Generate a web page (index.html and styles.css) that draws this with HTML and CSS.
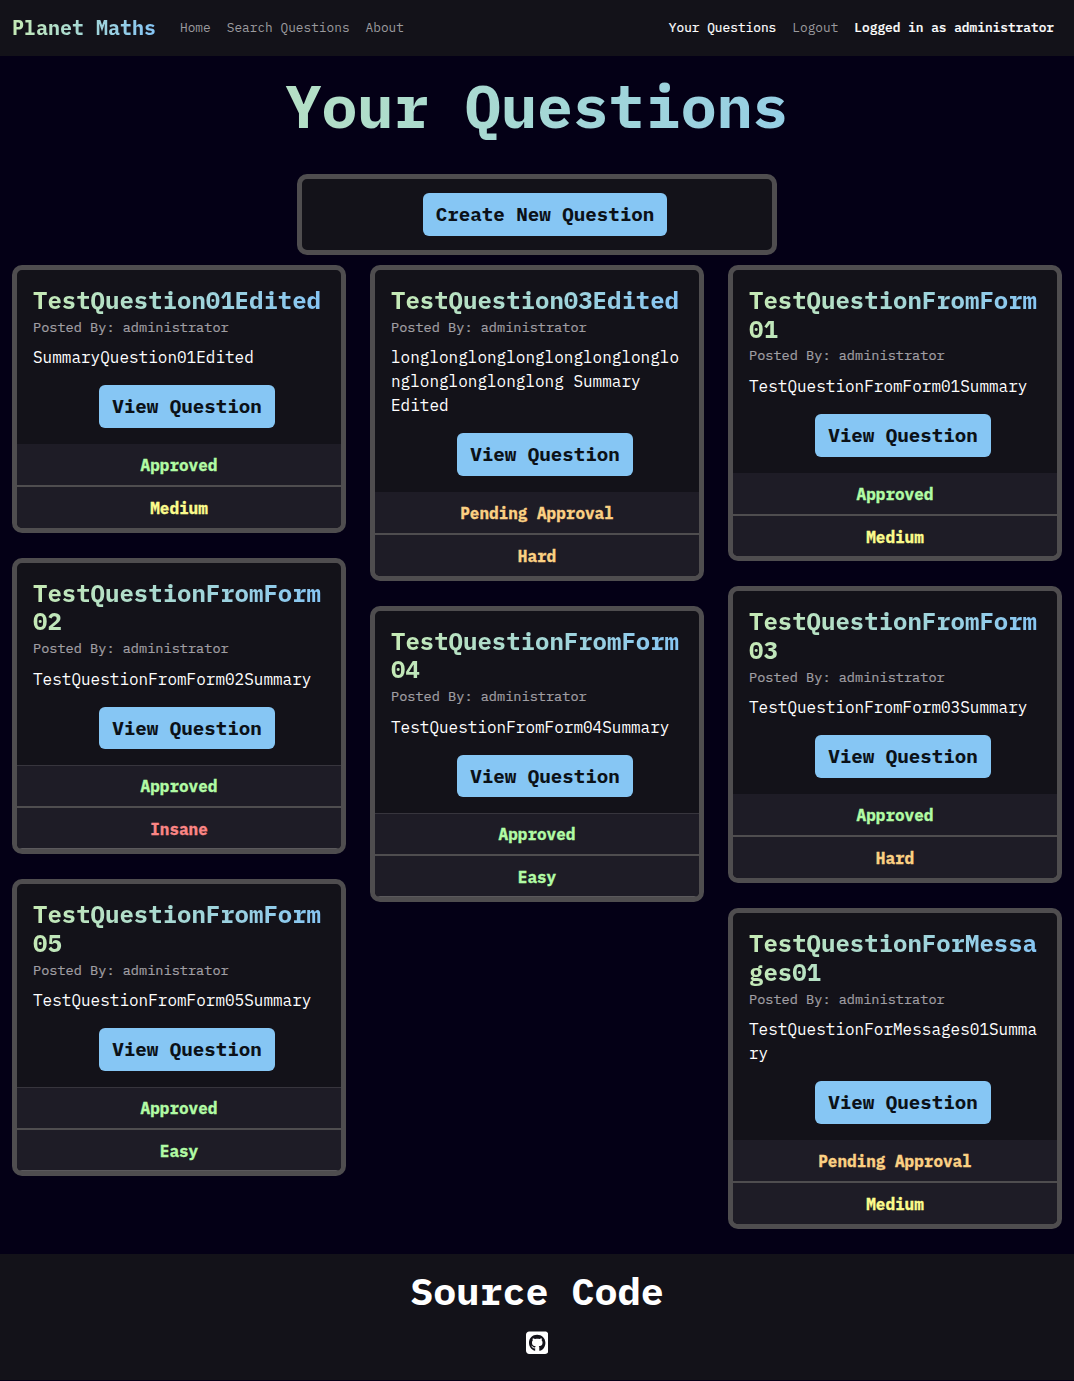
FILE: index.html
```html
<!DOCTYPE html>
<html lang="en">
<head>
<meta charset="utf-8">
<title>Planet Maths - Your Questions</title>
<link rel="stylesheet" href="styles.css">
</head>
<body>
<nav class="navbar">
  <a class="brand gradient-text">Planet Maths</a>
  <div class="nav-links">
    <a>Home</a>
    <a>Search Questions</a>
    <a>About</a>
  </div>
  <div class="nav-links nav-user">
    <a class="active">Your Questions</a>
    <a>Logout</a>
    <span class="active strong">Logged in as administrator</span>
  </div>
</nav>

<main>
  <h1 class="gradient-text">Your Questions</h1>
  <div class="create-box"><a class="btn">Create New Question</a></div>

  <div class="columns">
    <div class="column">
      <article class="card">
        <div class="card-body">
          <h2 class="gradient-text">TestQuestion01Edited</h2>
          <h3>Posted By: administrator</h3>
          <p>SummaryQuestion01Edited</p>
          <a class="btn">View Question</a>
        </div>
        <ul><li class="green">Approved</li><li class="yellow">Medium</li></ul>
      </article>
      <article class="card ruled">
        <div class="card-body">
          <h2 class="gradient-text">TestQuestionFromForm02</h2>
          <h3>Posted By: administrator</h3>
          <p>TestQuestionFromForm02Summary</p>
          <a class="btn">View Question</a>
        </div>
        <ul><li class="green">Approved</li><li class="red">Insane</li></ul>
      </article>
      <article class="card ruled">
        <div class="card-body">
          <h2 class="gradient-text">TestQuestionFromForm05</h2>
          <h3>Posted By: administrator</h3>
          <p>TestQuestionFromForm05Summary</p>
          <a class="btn">View Question</a>
        </div>
        <ul><li class="green">Approved</li><li class="green">Easy</li></ul>
      </article>
    </div>

    <div class="column">
      <article class="card">
        <div class="card-body">
          <h2 class="gradient-text">TestQuestion03Edited</h2>
          <h3>Posted By: administrator</h3>
          <p>longlonglonglonglonglonglonglonglonglonglonglong Summary Edited</p>
          <a class="btn">View Question</a>
        </div>
        <ul><li class="orange">Pending Approval</li><li class="orange">Hard</li></ul>
      </article>
      <article class="card ruled">
        <div class="card-body">
          <h2 class="gradient-text">TestQuestionFromForm04</h2>
          <h3>Posted By: administrator</h3>
          <p>TestQuestionFromForm04Summary</p>
          <a class="btn">View Question</a>
        </div>
        <ul><li class="green">Approved</li><li class="green">Easy</li></ul>
      </article>
    </div>

    <div class="column">
      <article class="card">
        <div class="card-body">
          <h2 class="gradient-text">TestQuestionFromForm01</h2>
          <h3>Posted By: administrator</h3>
          <p>TestQuestionFromForm01Summary</p>
          <a class="btn">View Question</a>
        </div>
        <ul><li class="green">Approved</li><li class="yellow">Medium</li></ul>
      </article>
      <article class="card">
        <div class="card-body">
          <h2 class="gradient-text">TestQuestionFromForm03</h2>
          <h3>Posted By: administrator</h3>
          <p>TestQuestionFromForm03Summary</p>
          <a class="btn">View Question</a>
        </div>
        <ul><li class="green">Approved</li><li class="orange">Hard</li></ul>
      </article>
      <article class="card">
        <div class="card-body">
          <h2 class="gradient-text">TestQuestionForMessages01</h2>
          <h3>Posted By: administrator</h3>
          <p>TestQuestionForMessages01Summary</p>
          <a class="btn">View Question</a>
        </div>
        <ul><li class="orange">Pending Approval</li><li class="yellow">Medium</li></ul>
      </article>
    </div>
  </div>
</main>

<footer>
  <h2>Source Code</h2>
  <svg class="github" viewBox="0 0 448 512" aria-label="GitHub"><path fill="#fff" fill-rule="evenodd" d="M384 32H64C28.700 32 0 60.700 0 96v320c0 35.300 28.700 64 64 64h320c35.300 0 64-28.700 64-64V96c0-35.300-28.700-64-64-64zM265.800 407.700c0-1.800 0-6 .1-11.600c.1-11.400 .1-28.800 .1-43.700c0-15.600-5.200-25.500-11.300-30.700c37-4.100 76-9.200 76-73.100c0-18.200-6.500-27.300-17.100-39c1.700-4.300 7.400-22-1.700-45c-13.900-4.300-45.700 17.900-45.700 17.900c-13.200-3.700-27.500-5.600-41.600-5.600s-28.400 1.900-41.600 5.600c0 0-31.800-22.200-45.700-17.900c-9.100 22.900-3.500 40.600-1.700 45c-10.600 11.700-15.600 20.800-15.600 39c0 63.600 37.300 69 74.300 73.100c-4.800 4.300-9.100 11.700-10.600 22.300c-9.500 4.300-33.800 11.700-48.300-13.900c-9.100-15.800-25.500-17.100-25.500-17.100c-16.200-.2-1.100 10.200-1.100 10.200c10.800 5 18.400 24.200 18.400 24.200c9.700 29.700 56.100 19.700 56.100 19.700c0 9 .1 21.700 .1 30.600c0 4.800 .1 8.600 .1 10c0 4.300-3 9.500-11.500 8C106 393.600 59.800 330.800 59.800 257.400c0-91.800 70.200-161.500 162-161.500s166.200 69.700 166.200 161.500c.1 73.400-44.700 136.300-110.700 158.300c-8.400 1.500-11.500-3.700-11.500-8z"/></svg>
</footer>
</body>
</html>
```

FILE: styles.css
```css
* { box-sizing: border-box; }

body {
  margin: 0;
  min-height: 1381px;
  background: #040016;
  color: #fff;
  font: 16px/24px "IBM Plex Mono", "Liberation Mono", monospace;
}

h1, h2, h3, p, ul { margin: 0; padding: 0; }

.gradient-text {
  background: linear-gradient(100deg, #c6eab4, #84c4f6);
  -webkit-background-clip: text;
  background-clip: text;
  color: transparent;
}

.navbar {
  height: 56px;
  padding: 0 20px 0 12px;
  display: flex;
  align-items: center;
  background: #131219;
}

.brand { font-size: 20px; font-weight: 700; margin-right: 24px; }

.nav-links { display: flex; gap: 16px; font-size: 12.8px; color: #9b9a9e; }
.nav-user { margin-left: auto; }
.active { color: #fff; -webkit-text-stroke: 0.2px #fff; }
.strong { font-weight: 500; }

main { padding: 14px 12px 0; height: 1198px; }

h1 { font-size: 59.9px; line-height: 72px; font-weight: 700; text-align: center; }

.create-box {
  width: 480px;
  margin: 32.4px auto 9.6px;
  padding: 14px;
  border: 5px solid #4f4d4f;
  border-radius: 10px;
  background: #131219;
  display: flex;
}

.btn {
  display: block;
  width: fit-content;
  margin: 0 auto;
  padding: 7px 13px;
  position: relative;
  left: 8px;
  border-radius: 6px;
  background: #86c6f4;
  color: #0b1118;
  font-size: 19.2px;
  line-height: 28.8px;
  font-weight: 700;
}

.columns { display: grid; grid-template-columns: repeat(3, 1fr); gap: 24px; align-items: start; }
.column { display: grid; gap: 24.9px; }

.card {
  min-width: 0;
  border: 5px solid #4f4d4f;
  border-radius: 10px;
  background: #131219;
  overflow: hidden;
}
.card-body { padding: 16px; overflow-wrap: anywhere; }
.card h2 { font-size: 24px; line-height: 28.8px; font-weight: 700; }
.card h3 {
  margin: 4px 0 10.2px;
  font-size: 13.6px;
  line-height: 16.3px;
  font-weight: 400;
  color: #a09fa3;
  -webkit-text-stroke: 0.2px #a09fa3;
}
.card p { margin-bottom: 16px; }

.card ul { list-style: none; background: #1e1c26; text-align: center; font-weight: 700; }
.card li { height: 40.8px; padding-top: 9px; -webkit-text-stroke: 0.3px currentColor; }
.card li:first-child { height: 43px; border-bottom: 2px solid #4f4d4f; }
.ruled ul { box-shadow: inset 0 1px #37353d, inset 0 -1px #5b595c; }

.green { color: #b1fba4; }
.yellow { color: #fbfb8c; }
.orange { color: #fbd083; }
.red { color: #fb8585; }

footer {
  height: 126px;
  padding-top: 14px;
  background: #131219;
  display: flex;
  flex-direction: column;
  align-items: center;
}
footer h2 { font-size: 38.4px; line-height: 46px; font-weight: 700; }
.github { width: 22.4px; height: 25.6px; margin-top: 16px; }
```
